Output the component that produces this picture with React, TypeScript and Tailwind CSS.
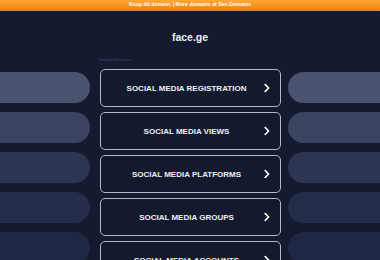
import React from "react";

const items = [
  "SOCIAL MEDIA REGISTRATION",
  "SOCIAL MEDIA VIEWS",
  "SOCIAL MEDIA PLATFORMS",
  "SOCIAL MEDIA GROUPS",
  "SOCIAL MEDIA ACCOUNTS",
];

const pillColors = ["bg-[#4c536f]", "bg-[#3b4361]", "bg-[#2d3553]", "bg-[#242c4a]", "bg-[#1f2745]"];

function Pills() {
  return (
    <div className="flex w-[180px] shrink-0 flex-col gap-[9px] pt-[3px]">
      {pillColors.map((c, i) => (
        <div key={i} className={`h-[31px] rounded-full ${c}`} />
      ))}
    </div>
  );
}

function Chevron() {
  return (
    <svg width="6" height="9" viewBox="0 0 6 9" className="absolute right-[10px] top-1/2 -translate-y-1/2">
      <path d="M1.2 1 L4.6 4.5 L1.2 8" fill="none" stroke="#ffffff" strokeWidth="1.7" strokeLinecap="round" strokeLinejoin="round" />
    </svg>
  );
}

export default function App() {
  return (
    <div className="h-[260px] w-[380px] overflow-hidden bg-[#141a2f]" style={{ fontFamily: '"Liberation Sans", Arial, sans-serif' }}>
      <div className="flex h-[11px] items-center justify-center border-b border-[#c98a5c] bg-gradient-to-b from-[#ffa834] to-[#ef8200]">
        <span className="text-[5.2px] font-bold leading-none text-white">Koop dit domein. | More domains at Seo.Domains</span>
      </div>
      <div className="flex h-[46px] items-center justify-center pt-[8px]">
        <span className="text-[10.5px] font-bold text-[#eef0f5]">face.ge</span>
      </div>
      <div className="ml-[99px] h-[12px] text-[4px] leading-[6px] text-[#454b69]">Related Searches</div>
      <div className="ml-[-90px] flex items-start">
        <Pills />
        <div className="ml-[10px] flex w-[181px] shrink-0 flex-col gap-[5px]">
          {items.map((t) => (
            <div
              key={t}
              className="relative flex h-[38px] items-center justify-center rounded-[5px] border-[1.5px] border-[#b3b7c6] bg-[#131a2e] pr-[8px] pt-[1px]"
            >
              <span className="text-[8px] font-bold text-[#eef0f5]">{t}</span>
              <Chevron />
            </div>
          ))}
        </div>
        <div className="ml-[7px]">
          <Pills />
        </div>
      </div>
    </div>
  );
}
